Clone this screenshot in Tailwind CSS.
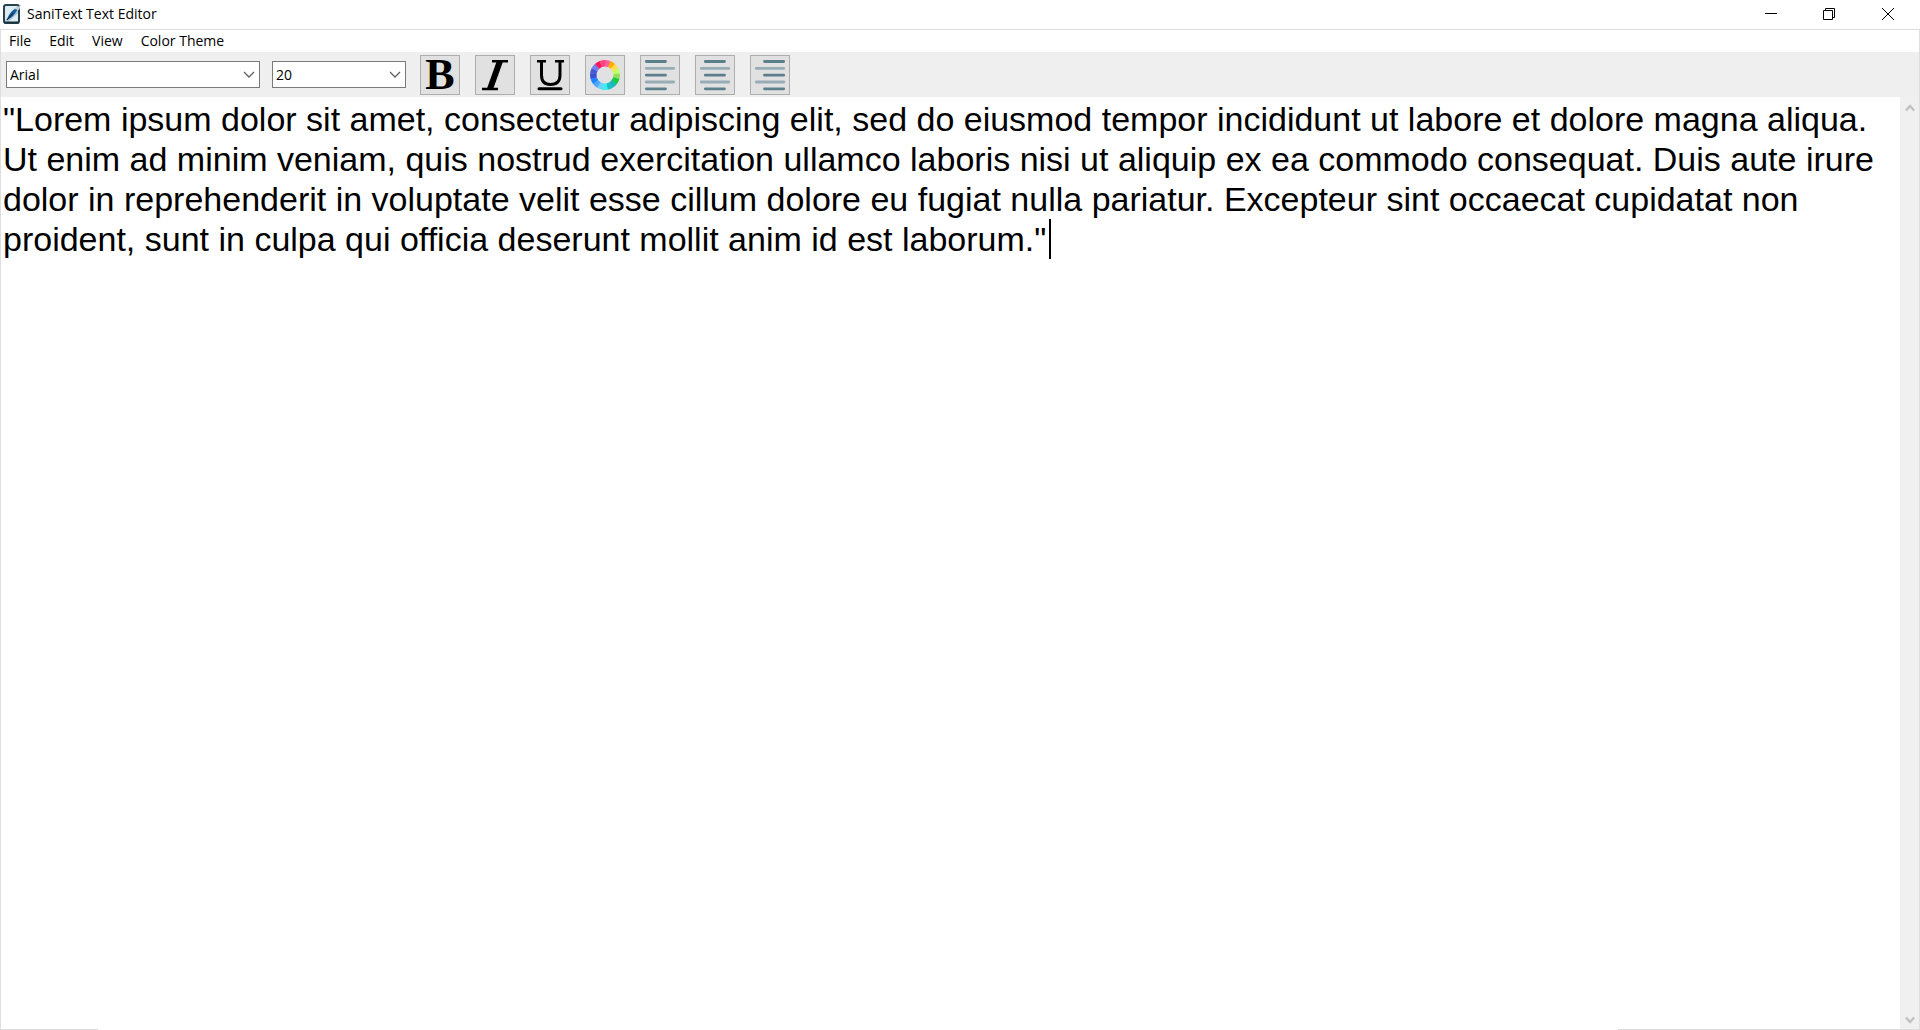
<!DOCTYPE html>
<html lang="en">
<head>
<meta charset="utf-8">
<title>SaniText Text Editor</title>
<script src="https://cdn.jsdelivr.net/npm/@tailwindcss/browser@4"></script>
</head>
<body class="flex h-screen flex-col overflow-hidden bg-white font-['Open_Sans',sans-serif] text-black">
  <header class="flex h-[29px] shrink-0 items-start">
    <svg class="mt-1 ml-[3px] h-5 w-[18px]" viewBox="0 0 18 20" aria-hidden="true">
      <rect x="1" y="1" width="15" height="18" rx="2" fill="#dcecf2" stroke="#28434c" stroke-width="2"/>
      <path d="M2 16 L15 3 V9 L5 18 Z" fill="#a9c4d4"/>
      <path d="M4 16 C5 11 9 6 15 3 C14 8 10 13 4 16 Z" fill="#155a9c"/>
      <path d="M4 16 L10 9" stroke="#0b2038" stroke-width="1"/>
      <path d="M11 5 L18 1 L16 6 Z" fill="#c3d3dc"/>
      <path d="M1 18.500 H16" stroke="#16323a" stroke-width="2"/>
    </svg>
    <h1 class="mt-1 ml-1.5 text-sm leading-5">SaniText Text Editor</h1>
    <div class="ml-auto flex h-7 pr-0.5">
      <button class="flex w-[58px] items-center justify-center" aria-label="Minimize"><svg class="h-3 w-3" viewBox="0 0 12 12"><path d="M0 5.500H12" stroke="#000"/></svg></button>
      <button class="flex w-[58px] items-center justify-center" aria-label="Restore"><svg class="h-3 w-3" viewBox="0 0 12 12" fill="none" stroke="#000"><path d="M.5 2.500H9.500V11.500H.5Z M2.500 2.500V.5H11.500V9.500H9.500"/></svg></button>
      <button class="flex w-[60px] items-center justify-center" aria-label="Close"><svg class="h-3 w-3" viewBox="0 0 12 12"><path d="M0 0L12 12M12 0L0 12" stroke="#000"/></svg></button>
    </div>
  </header>

  <main class="flex min-h-0 flex-1 flex-col border border-b-0 border-[#dedede]">
    <nav class="flex h-[22px] shrink-0 items-center gap-[18px] pl-2 text-sm leading-5">
      <button>File</button>
      <button>Edit</button>
      <button>View</button>
      <button>Color Theme</button>
    </nav>

    <div class="flex h-[45px] shrink-0 items-center bg-[#efefef] pl-[5px]" role="toolbar" aria-label="Formatting">
      <div class="relative mr-3">
        <select aria-label="Font family" class="block h-[27px] w-[254px] appearance-none border border-[#7a7a7a] bg-white pl-[3px] text-sm leading-5"><option>Arial</option></select>
        <svg class="pointer-events-none absolute top-2.5 right-[5px] h-2 w-3" viewBox="0 0 12 8" fill="none" stroke="#606060" stroke-width="1.300"><path d="M1 1L6 6L11 1"/></svg>
      </div>
      <div class="relative mr-3.5">
        <select aria-label="Font size" class="block h-[27px] w-[134px] appearance-none border border-[#7a7a7a] bg-white pl-[3px] text-sm leading-5"><option>20</option></select>
        <svg class="pointer-events-none absolute top-2.5 right-[5px] h-2 w-3" viewBox="0 0 12 8" fill="none" stroke="#606060" stroke-width="1.300"><path d="M1 1L6 6L11 1"/></svg>
      </div>
      <div class="flex gap-[15px]">
        <button class="flex size-10 items-center justify-center border border-[#adadad] bg-[#e1e1e1] font-['Liberation_Serif',serif] text-[44px] leading-10 font-bold" aria-label="Bold">B</button>
        <button class="size-10 border border-[#adadad] bg-[#e1e1e1]" aria-label="Italic">
          <svg class="size-full" viewBox="1 1 38 38" fill="none" stroke="#000"><path d="M17 6.200H33M7 34H23" stroke-width="2.600"/><path d="M25 6L15 34" stroke-width="6"/></svg>
        </button>
        <button class="size-10 border border-[#adadad] bg-[#e1e1e1]" aria-label="Underline">
          <svg class="size-full" viewBox="1 1 38 38" fill="none" stroke="#000"><path d="M7 6.200H16M25 6.200H34" stroke-width="2.600"/><path d="M11.500 6V20C11.500 26 14 29.500 20.500 29.500C27 29.500 30 26 30 20V6" stroke-width="3"/><path d="M9 33.700H31" stroke-width="3" stroke-linecap="round"/></svg>
        </button>
        <button class="size-10 border border-[#adadad] bg-[#e1e1e1]" aria-label="Text color">
          <svg id="wheel" class="size-full" viewBox="1 1 38 38" fill="none" stroke-width="6.500"></svg>
        </button>
        <button class="size-10 border border-[#adadad] bg-[#e1e1e1]" aria-label="Align left">
          <svg class="size-full" viewBox="1 1 38 38" stroke-width="2.800" stroke-linecap="round"><path d="M6.300 6.500H25.500M6.300 20.200H25.500M6.300 33.800H25.500" stroke="#5d7f8c"/><path d="M6.300 13.400H33.700M6.300 27H33.700" stroke="#98acb6"/></svg>
        </button>
        <button class="size-10 border border-[#adadad] bg-[#e1e1e1]" aria-label="Align center">
          <svg class="size-full" viewBox="1 1 38 38" stroke-width="2.800" stroke-linecap="round"><path d="M10.300 6.500H29.500M10.300 20.200H29.500M10.300 33.800H29.500" stroke="#5d7f8c"/><path d="M6.300 13.400H33.700M6.300 27H33.700" stroke="#98acb6"/></svg>
        </button>
        <button class="size-10 border border-[#adadad] bg-[#e1e1e1]" aria-label="Align right">
          <svg class="size-full" viewBox="1 1 38 38" stroke-width="2.800" stroke-linecap="round"><path d="M14.500 6.500H33.700M14.500 20.200H33.700M14.500 33.800H33.700" stroke="#5d7f8c"/><path d="M6.300 13.400H33.700M6.300 27H33.700" stroke="#98acb6"/></svg>
        </button>
      </div>
    </div>

    <div class="flex min-h-0 flex-1">
      <div class="relative min-w-0 flex-1">
        <textarea aria-label="Document" spellcheck="false" class="block h-full w-full resize-none overflow-hidden bg-white px-0.5 py-0.5 font-['Liberation_Sans',Arial,sans-serif] text-[34px] leading-10 outline-none">"Lorem ipsum dolor sit amet, consectetur adipiscing elit, sed do eiusmod tempor incididunt ut labore et dolore magna aliqua. Ut enim ad minim veniam, quis nostrud exercitation ullamco laboris nisi ut aliquip ex ea commodo consequat. Duis aute irure dolor in reprehenderit in voluptate velit esse cillum dolore eu fugiat nulla pariatur. Excepteur sint occaecat cupidatat non proident, sunt in culpa qui officia deserunt mollit anim id est laborum."</textarea>
        <span class="absolute top-[122px] left-[1048px] h-10 w-0.5 bg-black" aria-hidden="true"></span>
      </div>
      <div class="flex w-[19px] shrink-0 flex-col items-center justify-between bg-[#f0f0f0] pt-1.5 pb-1" aria-hidden="true">
        <svg class="h-2.5 w-2.5" viewBox="0 0 10 10" fill="none" stroke="#bfbfbf" stroke-width="2.200"><path d="M1 7.500L5 3L9 7.500"/></svg>
        <svg class="h-2.5 w-2.5" viewBox="0 0 10 10" fill="none" stroke="#bfbfbf" stroke-width="2.200"><path d="M1 2.500L5 7L9 2.500"/></svg>
      </div>
    </div>
  </main>
  <div class="flex h-px shrink-0 justify-between bg-white"><span class="w-[98px] bg-[#dedede]"></span><span class="w-[302px] bg-[#dedede]"></span></div>

  <script>
    const colors = ['#ff5e9c','#ffae00','#ffdc55','#bfff68','#97dc5b','#13cb3c','#19b8b5','#18bfc9','#3cecf0','#6bd0ff','#4ba6ff','#1b83ff','#3a4fd0','#4858d3','#7180ee','#ff1659','#ff4580'];
    const point = a => [20 + 11.7 * Math.sin(a), 20 - 11.7 * Math.cos(a)];
    const step = 2 * Math.PI / colors.length;
    document.getElementById('wheel').innerHTML = colors.map((c, i) => {
      const [x1, y1] = point(i * step), [x2, y2] = point((i + 1) * step + 0.02);
      return `<path d="M${x1} ${y1}A11.700 11.700 0 0 1 ${x2} ${y2}" stroke="${c}"/>`;
    }).join('');
  </script>
</body>
</html>
